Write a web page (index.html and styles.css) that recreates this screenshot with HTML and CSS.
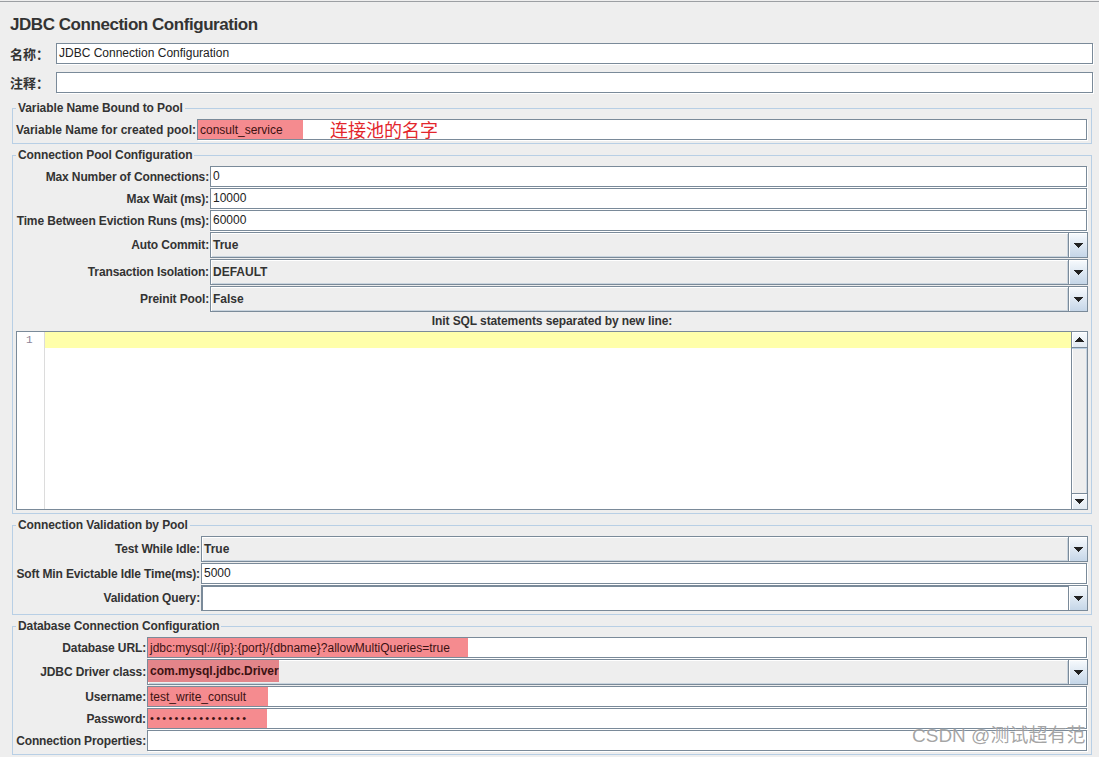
FILE: index.html
```html
<!DOCTYPE html>
<html lang="zh">
<head>
<meta charset="utf-8">
<title>JDBC Connection Configuration</title>
<link rel="stylesheet" href="styles.css">
</head>
<body>
<div class="page">
  <h1 class="title">JDBC Connection Configuration</h1>

  <div class="top-row">
    <span class="top-label">名称：</span>
    <div class="tf"><span class="txt">JDBC Connection Configuration</span></div>
  </div>
  <div class="top-row comment-row">
    <span class="top-label">注释：</span>
    <div class="tf"></div>
  </div>

  <fieldset class="group">
    <legend>Variable Name Bound to Pool</legend>
    <div class="form form-var">
      <label class="lbl">Variable Name for created pool:</label>
      <div class="tf"><span class="hl hl-var">consult_service</span><span class="note">连接池的名字</span></div>
    </div>
  </fieldset>

  <fieldset class="group">
    <legend>Connection Pool Configuration</legend>
    <div class="form form-pool">
      <label class="lbl">Max Number of Connections:</label>
      <div class="tf"><span class="txt">0</span></div>
      <label class="lbl">Max Wait (ms):</label>
      <div class="tf"><span class="txt">10000</span></div>
      <label class="lbl">Time Between Eviction Runs (ms):</label>
      <div class="tf"><span class="txt">60000</span></div>
      <label class="lbl">Auto Commit:</label>
      <div class="combo"><span class="val">True</span><span class="btn"><svg width="10" height="5" viewBox="0 0 10 5"><polygon points="0,0 10,0 5,5" fill="#222"/></svg></span></div>
      <label class="lbl">Transaction Isolation:</label>
      <div class="combo"><span class="val">DEFAULT</span><span class="btn"><svg width="10" height="5" viewBox="0 0 10 5"><polygon points="0,0 10,0 5,5" fill="#222"/></svg></span></div>
      <label class="lbl">Preinit Pool:</label>
      <div class="combo"><span class="val">False</span><span class="btn"><svg width="10" height="5" viewBox="0 0 10 5"><polygon points="0,0 10,0 5,5" fill="#222"/></svg></span></div>
      <div class="sql-label">Init SQL statements separated by new line:</div>
      <div class="editor">
        <div class="gutter"><span class="ln">1</span></div>
        <div class="code"><div class="cur-line"></div></div>
        <div class="vscroll">
          <span class="sbtn sbtn-up"><svg width="9" height="5" viewBox="0 0 9 5"><polygon points="0,5 9,5 4.5,0" fill="#222"/></svg></span>
          <span class="track"></span>
          <span class="sbtn sbtn-down"><svg width="9" height="5" viewBox="0 0 9 5"><polygon points="0,0 9,0 4.5,5" fill="#222"/></svg></span>
        </div>
      </div>
    </div>
  </fieldset>

  <fieldset class="group">
    <legend>Connection Validation by Pool</legend>
    <div class="form form-valid">
      <label class="lbl">Test While Idle:</label>
      <div class="combo"><span class="val">True</span><span class="btn"><svg width="10" height="5" viewBox="0 0 10 5"><polygon points="0,0 10,0 5,5" fill="#222"/></svg></span></div>
      <label class="lbl">Soft Min Evictable Idle Time(ms):</label>
      <div class="tf"><span class="txt">5000</span></div>
      <label class="lbl">Validation Query:</label>
      <div class="combo editable"><span class="val"></span><span class="btn"><svg width="10" height="5" viewBox="0 0 10 5"><polygon points="0,0 10,0 5,5" fill="#222"/></svg></span></div>
    </div>
  </fieldset>

  <fieldset class="group">
    <legend>Database Connection Configuration</legend>
    <div class="form form-db">
      <label class="lbl">Database URL:</label>
      <div class="tf"><span class="hl hl-url">jdbc:mysql://{ip}:{port}/{dbname}?allowMultiQueries=true</span></div>
      <label class="lbl">JDBC Driver class:</label>
      <div class="combo"><span class="val"><span class="hl hl-driver">com.mysql.jdbc.Driver</span></span><span class="btn"><svg width="10" height="5" viewBox="0 0 10 5"><polygon points="0,0 10,0 5,5" fill="#222"/></svg></span></div>
      <label class="lbl">Username:</label>
      <div class="tf"><span class="hl hl-user">test_write_consult</span></div>
      <label class="lbl">Password:</label>
      <div class="tf"><span class="hl hl-pass"><span class="dots">••••••••••••••••</span></span></div>
      <label class="lbl">Connection Properties:</label>
      <div class="tf"></div>
    </div>
  </fieldset>
</div>
<div class="watermark">CSDN @测试超有范</div>
</body>
</html>
```

FILE: styles.css
```css
html, body {
  margin: 0;
  padding: 0;
  background: #eeeeee;
}

body {
  font-family: "Liberation Sans", Arial, "Noto Sans CJK SC", sans-serif;
  font-size: 12px;
  color: #333333;
  position: relative;
  width: 1099px;
  height: 757px;
  overflow: hidden;
}

.page {
  margin-top: 1px;
  border-top: 1px solid #9c9fa3;
  padding: 13px 5px 0 10px;
}

.title {
  margin: 0;
  font-size: 17px;
  line-height: 20px;
  font-weight: bold;
  letter-spacing: -0.45px;
  color: #333333;
}

.top-row {
  display: grid;
  grid-template-columns: 46px 1fr;
  align-items: center;
  margin-top: 8px;
}

.top-row.comment-row {
  margin-top: 8px;
}

.top-label {
  font-family: "Noto Sans CJK SC", "Liberation Sans", sans-serif;
  font-weight: bold;
  font-size: 13px;
  line-height: 16px;
  color: #333333;
}

/* text field (Metal look) */
.tf {
  box-sizing: border-box;
  height: 21px;
  width: calc(100% - 1px);
  border: 1px solid #7a8a99;
  background: #ffffff;
  box-shadow: 1px 1px 0 #ffffff;
  display: flex;
  align-items: center;
  font-size: 12px;
  color: #222222;
  white-space: nowrap;
  overflow: visible;
}

.txt {
  padding-left: 2px;
  line-height: 19px;
}

/* fieldset groups */
.group {
  margin: 4px 2px 0;
  padding: 4px 3px 3px 3px;
  border: 1px solid #b8cfe5;
  min-width: 0;
}

.top-row.comment-row + .group {
  margin-top: 8px;
}

.group legend {
  padding: 0 2px;
  font-weight: bold;
  font-size: 12px;
  line-height: 14px;
  letter-spacing: -0.1px;
  color: #333333;
}

.form {
  display: grid;
  row-gap: 1px;
  align-items: center;
}

.form-var { grid-template-columns: 181px 1fr; }
.form-pool { grid-template-columns: 194px 1fr; }
.form-valid { grid-template-columns: 185px 1fr; }
.form-db { grid-template-columns: 131px 1fr; }

.lbl {
  display: flex;
  justify-content: flex-end;
  padding-right: 1px;
  font-weight: bold;
  font-size: 12px;
  line-height: 14px;
  letter-spacing: -0.13px;
  white-space: nowrap;
  color: #333333;
}

.form-var .lbl {
  letter-spacing: 0;
}

/* highlights (annotation marks) */
.hl {
  align-self: stretch;
  display: flex;
  align-items: center;
  box-sizing: border-box;
  padding-left: 2px;
  background: #f58b8f;
  color: #3c1212;
  overflow: hidden;
}

.hl-var { width: 105px; }
.hl-url { width: 320px; }
.hl-user { width: 120px; }
.hl-pass { width: 119px; }
.hl-driver {
  width: 131px;
  height: 22px;
  margin-left: -2px;
  background: #e3858a;
}

.note {
  margin-left: 27px;
  font-family: "Noto Sans CJK SC", sans-serif;
  font-size: 18px;
  line-height: 19px;
  color: #e3262c;
}

.dots {
  font-size: 11px;
  letter-spacing: 2.3px;
  line-height: 19px;
}

/* combo box */
.combo {
  box-sizing: border-box;
  height: 26px;
  border: 1px solid #7a8a99;
  background: #eeeeee;
  display: flex;
}

.combo .val {
  flex: 1;
  display: flex;
  align-items: center;
  padding-left: 2px;
  font-weight: bold;
  font-size: 12px;
  color: #333333;
  box-shadow: inset 1px 1px 0 #ffffff, inset -1px -1px 0 #c9d4de;
  white-space: nowrap;
}

.combo.editable .val {
  background: #ffffff;
  box-shadow: inset 1px 1px 0 #7a8a99;
}

.combo .btn {
  width: 18px;
  border-left: 1px solid #7a8a99;
  background: linear-gradient(#f7fafd, #c5d6e8);
  box-shadow: inset 1px 1px 0 #ffffff;
  display: flex;
  align-items: center;
  justify-content: center;
}

.combo .btn svg {
  display: block;
  shape-rendering: crispEdges;
  margin-top: 1px;
}

/* SQL editor */
.sql-label {
  grid-column: 1 / -1;
  text-align: center;
  font-weight: bold;
  font-size: 12px;
  line-height: 14px;
  letter-spacing: -0.1px;
  margin-top: 1px;
  color: #333333;
}

.editor {
  grid-column: 1 / -1;
  margin-top: 2px;
  box-sizing: border-box;
  height: 179px;
  border: 1px solid #7a8a99;
  background: #ffffff;
  display: flex;
}

.gutter {
  width: 28px;
  border-right: 1px solid #dcdcdc;
  background: #ffffff;
  padding-left: 9px;
  box-sizing: border-box;
}

.ln {
  display: block;
  font-family: "Liberation Mono", "DejaVu Sans Mono", monospace;
  font-size: 11px;
  line-height: 16px;
  color: #8a8296;
}

.code {
  flex: 1;
}

.cur-line {
  height: 16px;
  background: #ffffaa;
}

.vscroll {
  width: 15px;
  border-left: 1px solid #7a8a99;
  background: #eeeeee;
  display: flex;
  flex-direction: column;
}

.sbtn {
  height: 16px;
  box-sizing: border-box;
  display: flex;
  align-items: center;
  justify-content: center;
  background: linear-gradient(#f7fafd, #e2eaf2);
  box-shadow: inset 1px 1px 0 #ffffff;
}

.sbtn svg {
  display: block;
  shape-rendering: crispEdges;
}

.sbtn-up {
  border-bottom: 1px solid #7a8a99;
}

.sbtn-down {
  border-top: 1px solid #7a8a99;
}

.track {
  flex: 1;
  border-top: 1px solid #b8cfe5;
  box-shadow: inset 1px 0 0 #ffffff, inset -1px 0 0 #c8d5e2;
}

/* watermark overlay */
.watermark {
  position: absolute;
  left: 912px;
  top: 726px;
  font-family: "Liberation Sans", "Noto Sans CJK SC", sans-serif;
  font-size: 19px;
  line-height: 20px;
  color: rgba(105, 105, 105, 0.6);
  text-shadow: 0 0 1px rgba(255, 255, 255, 0.9);
  white-space: nowrap;
}
```
